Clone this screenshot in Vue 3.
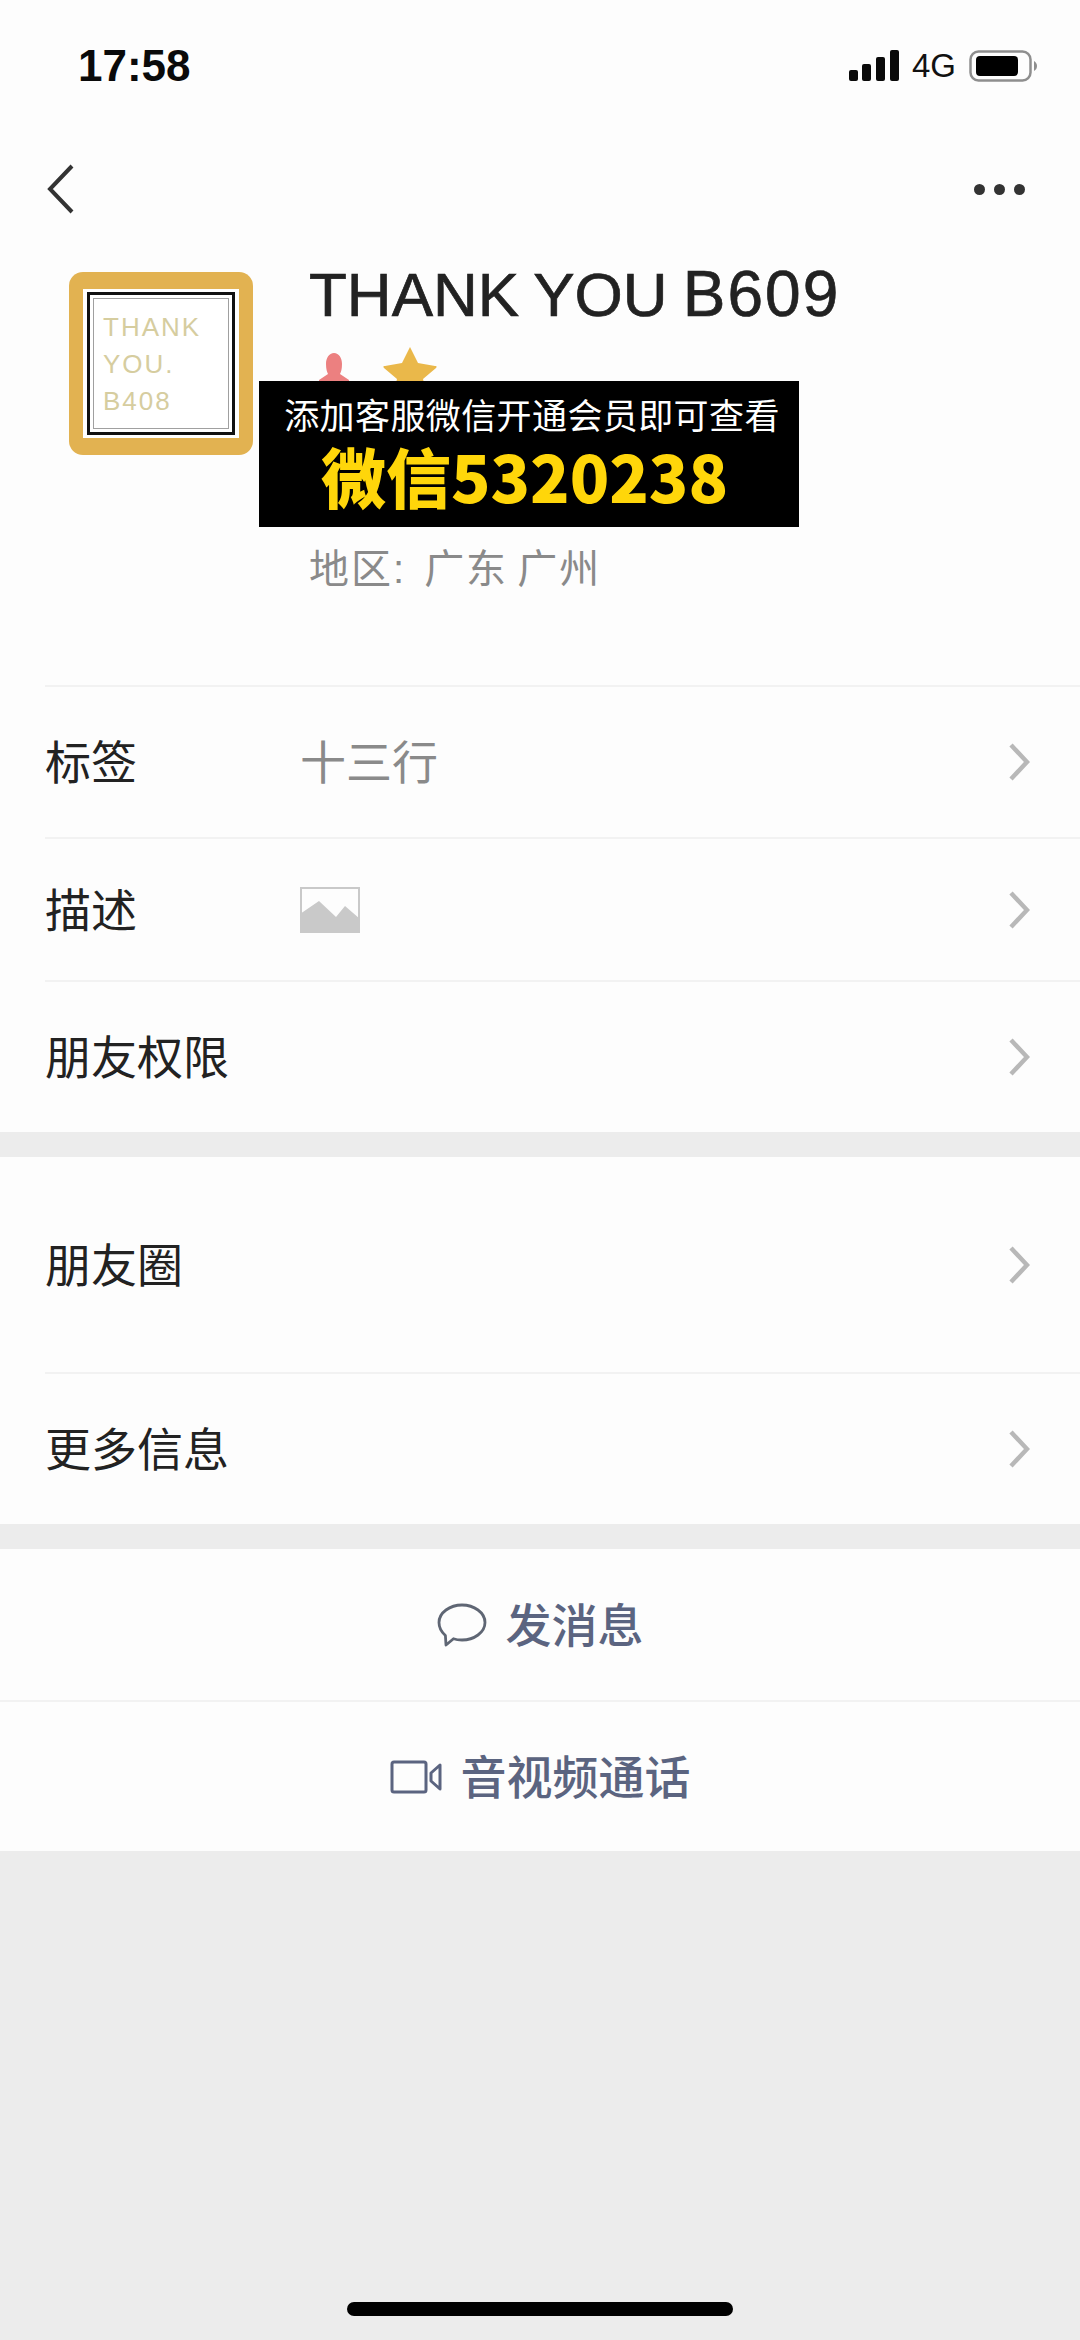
<script setup>
const infoRows = [
  { label: '标签', value: '十三行', h: 152 },
  { label: '描述', image: true, h: 143 },
  { label: '朋友权限', h: 152 },
]
const moreRows = [
  { label: '朋友圈', h: 215 },
  { label: '更多信息', h: 152 },
]
</script>

<template>
  <div class="page">
    <div class="status">
      <span class="time">17:58</span>
      <div class="status-right">
        <svg class="signal" width="50" height="32" viewBox="0 0 50 32">
          <rect x="0" y="20" width="9" height="11" rx="2" />
          <rect x="13" y="14" width="9" height="17" rx="2" />
          <rect x="27" y="7" width="9" height="24" rx="2" />
          <rect x="41" y="0" width="9" height="31" rx="2" />
        </svg>
        <span class="net">4G</span>
        <svg class="battery" width="68" height="32" viewBox="0 0 68 32">
          <rect x="1.500" y="1.500" width="60" height="29" rx="8" fill="none" stroke="#8e8e8e" stroke-width="2.500" />
          <rect x="7" y="6" width="42" height="20" rx="4" fill="#000" />
          <path d="M65 11c2 1 3 3 3 5s-1 4-3 5z" fill="#8e8e8e" />
        </svg>
      </div>
    </div>

    <div class="nav">
      <svg width="30" height="50" viewBox="0 0 30 50">
        <path d="M26 2 4 25l22 23" fill="none" stroke="#333" stroke-width="4" />
      </svg>
      <div class="dots"><i></i><i></i><i></i></div>
    </div>

    <div class="profile">
      <div class="avatar">
        <div class="avatar-frame">
          <div class="avatar-mid">
            <div class="avatar-inner">
              <span>THANK</span>
              <span>YOU.</span>
              <span>B408</span>
            </div>
          </div>
        </div>
      </div>
      <div class="info">
        <div class="name">THANK YOU <span class="name-code">B609</span></div>
        <div class="badges">
          <svg width="32" height="36" viewBox="0 0 32 36">
            <path d="M16 0c5 0 8 5 8 11 0 5-1 8-2 10l9 6v9H1v-9l9-6c-1-2-2-5-2-10C8 5 11 0 16 0z" fill="#ec8080" />
          </svg>
          <svg width="54" height="50" viewBox="0 0 54 50">
            <path d="M27 1l8 16 17 3c2 0 2 1 1 2L40 33l4 16-17-9-17 9 4-16L1 22c-1-1-1-2 1-2l17-3z" fill="#eab84a" />
          </svg>
        </div>
        <div class="region"><span class="region-key">地区:</span><span class="region-val">广东 广州</span></div>
      </div>
      <div class="banner">
        <div class="banner-top">添加客服微信开通会员即可查看</div>
        <div class="banner-main">微信5320238</div>
      </div>
    </div>

    <section class="group">
      <div v-for="row in infoRows" :key="row.label" class="row" :style="{ height: row.h + 'px' }">
        <span class="label">{{ row.label }}</span>
        <span v-if="row.value" class="value">{{ row.value }}</span>
        <svg v-if="row.image" class="pic" width="60" height="46" viewBox="0 0 60 46">
          <rect x="1" y="1" width="58" height="44" fill="#fdfdfd" stroke="#c9c9c9" stroke-width="2" />
          <path d="M0 27 19 14l17 16 9-11 15 13v14H0z" fill="#c9c9c9" />
        </svg>
        <svg class="chev" width="22" height="40" viewBox="0 0 22 40">
          <path d="M3 3l16 17L3 37" fill="none" stroke="#b8b8b8" stroke-width="4.500" />
        </svg>
      </div>
    </section>

    <section class="group gap">
      <div v-for="row in moreRows" :key="row.label" class="row" :style="{ height: row.h + 'px' }">
        <span class="label">{{ row.label }}</span>
        <svg class="chev" width="22" height="40" viewBox="0 0 22 40">
          <path d="M3 3l16 17L3 37" fill="none" stroke="#b8b8b8" stroke-width="4.500" />
        </svg>
      </div>
    </section>

    <section class="group gap actions">
      <div class="action">
        <svg width="50" height="46" viewBox="0 0 50 46">
          <path d="M25 3c12 0 23 7.500 23 17.500S37 38 25 38c-3.500 0-6-.4-8.500-1.300L9 43l-.6-9.500C4.500 30 2 25.500 2 20.500 2 10.500 13 3 25 3z" fill="none" stroke="#5f6674" stroke-width="2.800" stroke-linejoin="round" />
        </svg>
        <span class="action-text">发消息</span>
      </div>
      <div class="action">
        <svg width="52" height="34" viewBox="0 0 52 34">
          <rect x="2" y="2" width="34" height="30" rx="2" fill="none" stroke="#5b6480" stroke-width="3" />
          <path d="M50 5v24l-9-8v-8z" fill="none" stroke="#5b6480" stroke-width="3" stroke-linejoin="round" />
        </svg>
        <span class="action-text">音视频通话</span>
      </div>
    </section>

    <div class="bottom"><div class="home"></div></div>
  </div>
</template>

<style scoped>
.page {
  width: 1080px;
  height: 2340px;
  display: flex;
  flex-direction: column;
  background: #fdfdfd;
  font-family: "Liberation Sans", "Noto Sans CJK SC", sans-serif;
  overflow: hidden;
}
.status {
  height: 132px;
  flex: none;
  box-sizing: border-box;
  padding: 50px 43px 0 78px;
  display: flex;
  justify-content: space-between;
  align-items: flex-start;
}
.time {
  font-size: 44px;
  font-weight: 700;
  line-height: 32px;
  color: #0a0a0a;
}
.status-right {
  display: flex;
  align-items: center;
  gap: 13px;
}
.signal {
  fill: #0a0a0a;
}
.net {
  font-size: 33px;
  line-height: 32px;
  color: #111;
}
.nav {
  height: 114px;
  flex: none;
  box-sizing: border-box;
  padding: 0 55px 0 46px;
  display: flex;
  justify-content: space-between;
  align-items: center;
  margin-bottom: 26px;
}
.dots {
  display: flex;
  gap: 9px;
}
.dots i {
  width: 11px;
  height: 11px;
  border-radius: 50%;
  background: #333;
}
.profile {
  position: relative;
  height: 413px;
  flex: none;
  box-sizing: border-box;
  padding-left: 69px;
  display: flex;
  gap: 56px;
  align-items: flex-start;
}
.avatar {
  width: 184px;
  height: 183px;
  flex: none;
  box-sizing: border-box;
  padding: 17px 14px;
  border-radius: 14px;
  background: #e2b251;
}
.avatar-frame {
  height: 100%;
  box-sizing: border-box;
  padding: 3px 4px;
  background: #fff;
}
.avatar-mid {
  height: 100%;
  box-sizing: border-box;
  padding: 3px;
  border: 3px solid #111;
}
.avatar-inner {
  height: 100%;
  box-sizing: border-box;
  border: 1px solid #a0a0a0;
  padding: 14px 0 0 9px;
  display: flex;
  flex-direction: column;
  gap: 8px;
  font-size: 26px;
  line-height: 29px;
  letter-spacing: 2px;
  color: #d6cd9f;
}
.info {
  flex: 1;
  min-width: 0;
}
.name {
  margin-top: -14px;
  font-size: 62px;
  line-height: 72px;
  word-spacing: -2px;
  color: #222;
  white-space: nowrap;
  -webkit-text-stroke: 0.7px #222;
}
.name-code {
  font-size: 64px;
  letter-spacing: 2px;
}
.badges {
  margin-top: 15px;
  display: flex;
  align-items: flex-start;
  gap: 33px;
  height: 36px;
  overflow: hidden;
  margin-left: 9px;
}
.badges svg:first-child {
  margin-top: 7px;
}
.region {
  margin-top: 164px;
  font-size: 40px;
  line-height: 46px;
  letter-spacing: 2px;
  color: #8a8a8a;
  white-space: nowrap;
}
.region-key {
  margin-right: 18px;
}
.region-val {
  word-spacing: -4px;
}
.banner {
  position: absolute;
  left: 259px;
  top: 109px;
  width: 540px;
  height: 146px;
  background: #000;
  box-sizing: border-box;
  display: flex;
  flex-direction: column;
  align-items: center;
}
.banner-top {
  margin: 17px 0 0 6px;
  font-size: 35px;
  line-height: 38px;
  letter-spacing: .4px;
  color: #fff;
  white-space: nowrap;
}
.banner-main {
  margin: 4px 9px 0 0;
  font-family: "Noto Sans CJK SC", sans-serif;
  font-size: 65px;
  line-height: 70px;
  font-weight: 900;
  color: #ffd60a;
  white-space: nowrap;
}
.group {
  flex: none;
  background: #fdfdfd;
}
.gap {
  border-top: 25px solid #ececec;
}
.row {
  box-sizing: border-box;
  margin-left: 45px;
  padding-right: 50px;
  display: flex;
  align-items: center;
  border-top: 2px solid #f2f2f2;
}
.gap .row:first-child {
  border-top: 0;
}
.label {
  width: 255px;
  flex: none;
  margin-bottom: 6px;
  font-size: 46px;
  color: #222;
  white-space: nowrap;
}
.value {
  margin-bottom: 6px;
  font-size: 46px;
  color: #8a8a8a;
}
.chev {
  margin-left: auto;
}
.actions .action + .action {
  border-top: 2px solid #f2f2f2;
}
.action {
  height: 151px;
  box-sizing: border-box;
  display: flex;
  align-items: center;
  justify-content: center;
  gap: 19px;
  font-size: 46px;
  font-weight: 500;
  color: #5b6480;
}
.action-text {
  margin-bottom: 6px;
}
.bottom {
  flex: 1;
  background: #ececec;
  display: flex;
  justify-content: center;
  align-items: flex-end;
  padding-bottom: 24px;
}
.home {
  width: 386px;
  height: 14px;
  border-radius: 7px;
  background: #000;
}
</style>
